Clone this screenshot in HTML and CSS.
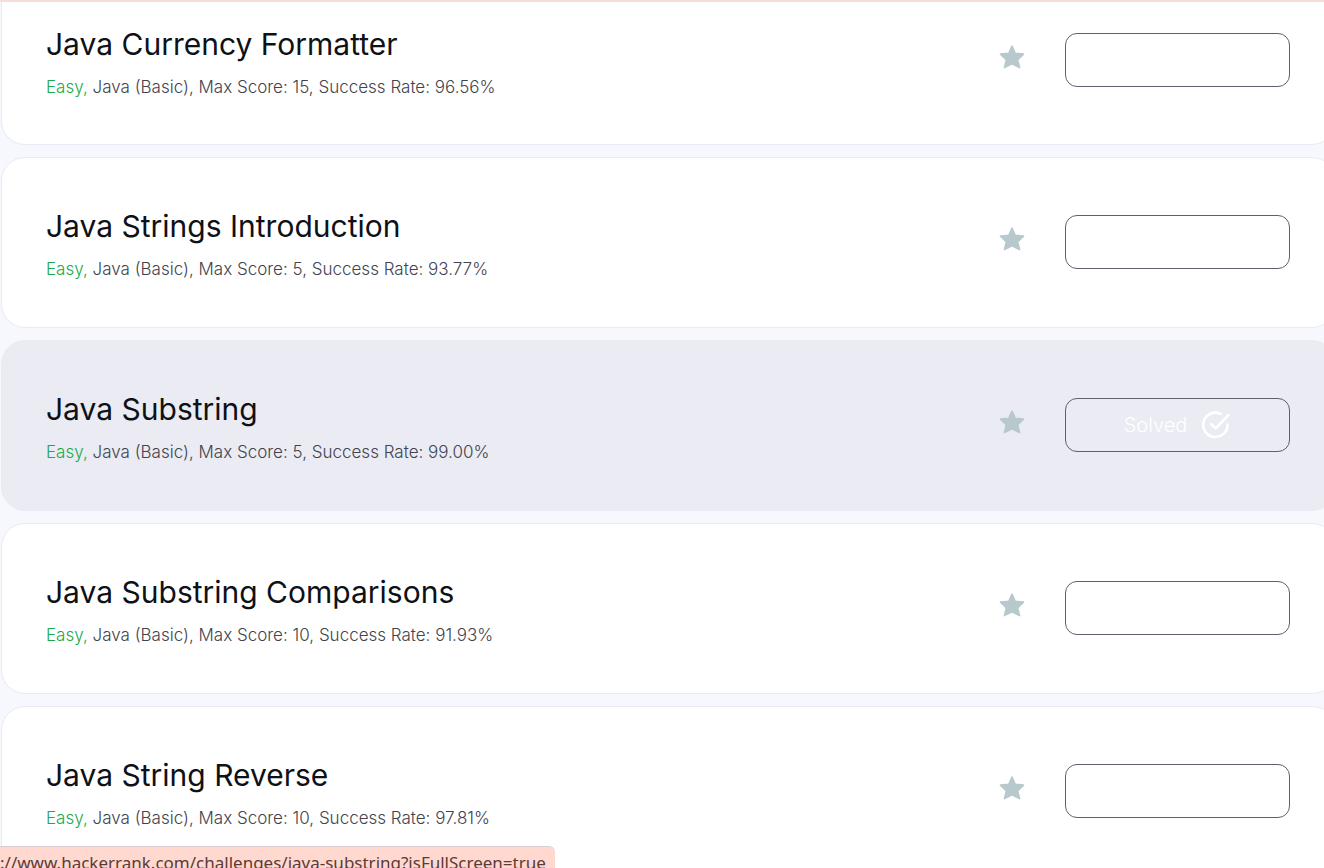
FILE: index.html
```html
<!DOCTYPE html>
<html lang="en">
<head>
<meta charset="utf-8">
<meta name="viewport" content="width=device-width, initial-scale=1">
<title>Java Challenges</title>
<link rel="stylesheet" href="styles.css">
</head>
<body>
<svg class="sprite" aria-hidden="true">
  <symbol id="star" viewBox="0 0 26 24">
    <path d="M13 1.2 16.2 8.3 24.5 9.1 18.6 14.8 20.6 22.6 13 18.9 5.4 22.6 7.4 14.8 1.5 9.1 9.8 8.3Z" fill="currentColor" stroke="currentColor" stroke-width="1.6" stroke-linejoin="round"/>
  </symbol>
</svg>
<main class="challenges">
  <article class="card card-first">
    <div class="info">
      <h2 class="title">Java Currency Formatter</h2>
      <p class="meta"><span class="easy">Easy,</span> Java (Basic), Max Score: 15, Success Rate: 96.56%</p>
    </div>
    <button class="star" type="button" aria-label="Bookmark"><svg class="star-icon"><use href="#star"/></svg></button>
    <button class="solved" type="button" aria-label="Solved"></button>
  </article>
  <article class="card">
    <div class="info">
      <h2 class="title">Java Strings Introduction</h2>
      <p class="meta"><span class="easy">Easy,</span> Java (Basic), Max Score: 5, Success Rate: 93.77%</p>
    </div>
    <button class="star" type="button" aria-label="Bookmark"><svg class="star-icon"><use href="#star"/></svg></button>
    <button class="solved" type="button" aria-label="Solved"></button>
  </article>
  <article class="card card-active">
    <div class="info">
      <h2 class="title">Java Substring</h2>
      <p class="meta"><span class="easy">Easy,</span> Java (Basic), Max Score: 5, Success Rate: 99.00%</p>
    </div>
    <button class="star" type="button" aria-label="Bookmark"><svg class="star-icon"><use href="#star"/></svg></button>
    <button class="solved" type="button"><span>Solved</span>
      <svg class="check" viewBox="0 0 30 30" fill="none" stroke="currentColor" stroke-width="2.6" stroke-linecap="round" stroke-linejoin="round" aria-hidden="true">
        <path d="M19.6 3.8A12.2 12.2 0 1 0 26.6 14.9"/>
        <path d="M10.2 14.1 14.6 18.4 27.6 4.9"/>
      </svg>
    </button>
  </article>
  <article class="card">
    <div class="info">
      <h2 class="title">Java Substring Comparisons</h2>
      <p class="meta"><span class="easy">Easy,</span> Java (Basic), Max Score: 10, Success Rate: 91.93%</p>
    </div>
    <button class="star" type="button" aria-label="Bookmark"><svg class="star-icon"><use href="#star"/></svg></button>
    <button class="solved" type="button" aria-label="Solved"></button>
  </article>
  <article class="card">
    <div class="info">
      <h2 class="title">Java String Reverse</h2>
      <p class="meta"><span class="easy">Easy,</span> Java (Basic), Max Score: 10, Success Rate: 97.81%</p>
    </div>
    <button class="star" type="button" aria-label="Bookmark"><svg class="star-icon"><use href="#star"/></svg></button>
    <button class="solved" type="button" aria-label="Solved"></button>
  </article>
</main>
<div class="status">://www.hackerrank.com/challenges/java-substring?isFullScreen=true</div>
</body>
</html>
```
FILE: styles.css
```css
* { box-sizing: border-box; }
html { height: 100%; }
body {
  margin: 0;
  height: 100%;
  overflow: hidden;
  background: #f7f8fe;
  border-top: 2px solid #f6ddd8;
  font-family: Inter, "Liberation Sans", sans-serif;
}
.sprite { display: none; }
.challenges {
  display: flex;
  flex-direction: column;
  gap: 12px;
  margin: 0 -12px 0 1px;
}
.card {
  display: flex;
  align-items: flex-start;
  padding: 46px 45px 46px 44px;
  border: 1px solid #e9eaf3;
  border-radius: 24px;
  background: #fff;
}
.card-first {
  padding-top: 20px;
  padding-bottom: 45px;
  border-top: 0;
  border-radius: 0 0 24px 24px;
}
.card-active { background: #eaebf3; }
.info { flex: 1; }
.title {
  margin: 0 0 9px;
  font-size: 30px;
  line-height: 44px;
  font-weight: 400;
  color: #0e1116;
}
.meta {
  margin: 0;
  font-size: 17px;
  line-height: 24px;
  font-weight: 300;
  color: #42434e;
}
.easy { color: #1ba94c; }
.star {
  margin: 23px 40px 0 0;
  padding: 0;
  border: 0;
  background: none;
  color: #b7c9cc;
}
.star-icon { display: block; width: 26px; height: 24px; }
.solved {
  display: flex;
  align-items: center;
  justify-content: center;
  gap: 14px;
  width: 225px;
  height: 54px;
  margin-top: 11px;
  padding: 0;
  border: 1px solid #5f606e;
  border-radius: 12px;
  background: transparent;
  color: #fff;
  font-family: inherit;
  font-size: 20px;
  font-weight: 300;
}
.check { width: 30px; height: 30px; }
.status {
  position: fixed;
  left: 0;
  bottom: 0;
  height: 22px;
  padding: 4px 9px 0 0;
  overflow: hidden;
  border-top: 1px solid #d9cfd2;
  border-radius: 0 6px 0 0;
  background: #ffd9cf;
  color: #5c3a38;
  font-family: "Noto Sans", sans-serif;
  font-size: 17px;
  line-height: 24px;
  white-space: nowrap;
}
```
